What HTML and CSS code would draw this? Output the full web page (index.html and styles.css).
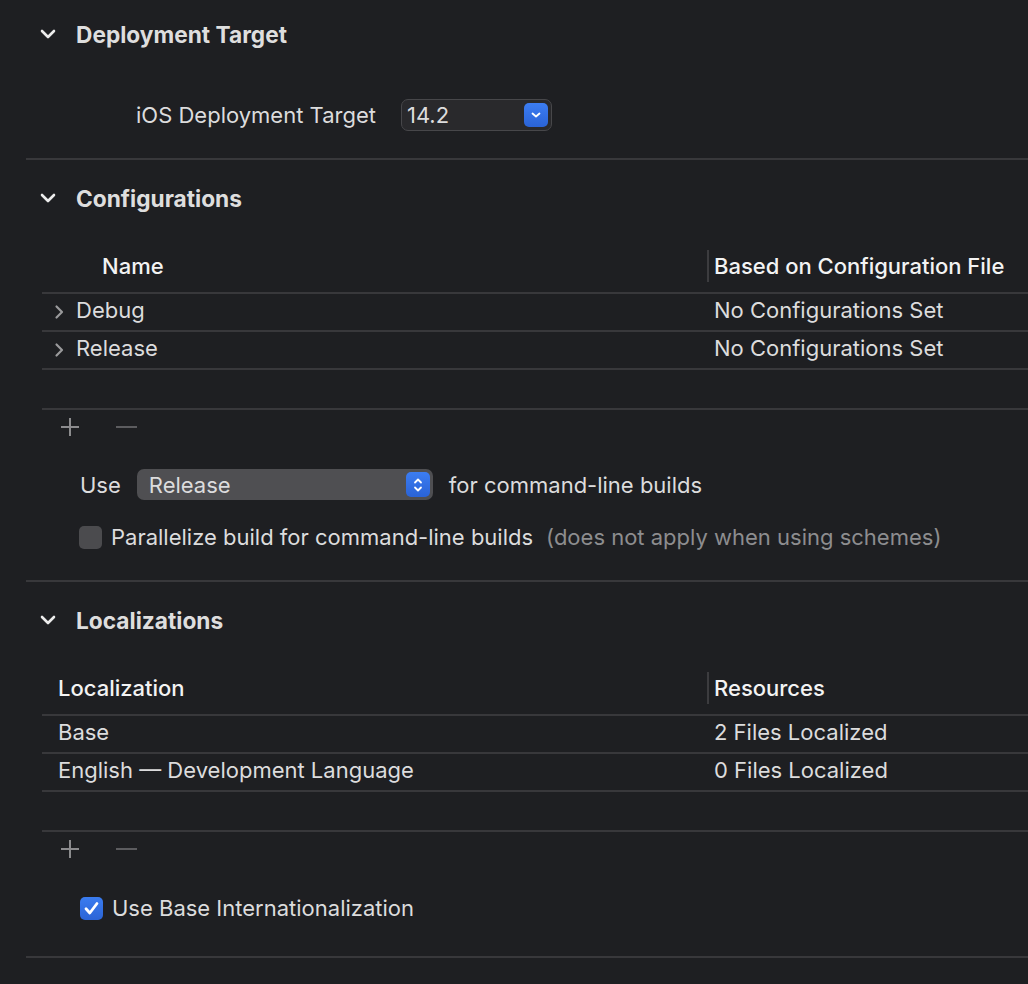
FILE: index.html
```html
<!DOCTYPE html>
<html>
<head>
<meta charset="utf-8">
<link rel="stylesheet" href="styles.css">
</head>
<body>
<div class="page">
  <section class="sec sec-first">
    <div class="sec-head head-first">
      <svg class="sec-chev" width="16" height="10" viewBox="0 0 16 10"><path d="M2 2 L8 8 L14 2" /></svg>
      <h2 class="sec-title">Deployment Target</h2>
    </div>
    <div class="field-row">
      <span class="field-label">iOS Deployment Target</span>
      <div class="popup popup-dark">
        <span class="popup-text">14.2</span>
        <span class="pbtn pbtn-down"><svg width="12" height="8" viewBox="0 0 12 8"><path d="M2.5 2.5 L6 5.5 L9.5 2.5" /></svg></span>
      </div>
    </div>
  </section>

  <section class="sec sec-config">
    <div class="sec-head">
      <svg class="sec-chev" width="16" height="10" viewBox="0 0 16 10"><path d="M2 2 L8 8 L14 2" /></svg>
      <h2 class="sec-title">Configurations</h2>
    </div>
    <div class="table">
      <div class="trow thead">
        <div class="c1 c1-name">Name</div>
        <div class="c2"><span class="coldiv"></span>Based on Configuration File</div>
      </div>
      <div class="trow">
        <div class="c1 c1-disc"><svg class="disc" width="10" height="16" viewBox="0 0 10 16"><path d="M2.5 2.5 L8 8 L2.5 13.5" /></svg>Debug</div>
        <div class="c2">No Configurations Set</div>
      </div>
      <div class="trow">
        <div class="c1 c1-disc"><svg class="disc" width="10" height="16" viewBox="0 0 10 16"><path d="M2.5 2.5 L8 8 L2.5 13.5" /></svg>Release</div>
        <div class="c2">No Configurations Set</div>
      </div>
      <div class="trow trow-empty"></div>
    </div>
    <div class="addrm">
      <svg class="plus" width="18" height="18" viewBox="0 0 18 18"><path d="M9 0 V18 M0 9 H18" /></svg>
      <svg class="minus" width="21" height="4" viewBox="0 0 21 4"><path d="M0 2 H21" /></svg>
    </div>
    <div class="use-row">
      <span>Use</span>
      <div class="popup popup-light">
        <span class="popup-text">Release</span>
        <span class="pbtn pbtn-step"><svg width="12" height="20" viewBox="0 0 12 20"><path d="M3 7.5 L6 4.5 L9 7.5 M3 12.5 L6 15.5 L9 12.5" /></svg></span>
      </div>
      <span>for command-line builds</span>
    </div>
    <div class="check-row check-par">
      <span class="cb"></span>
      <span>Parallelize build for command-line builds</span>
      <span class="muted">(does not apply when using schemes)</span>
    </div>
  </section>

  <section class="sec sec-loc">
    <div class="sec-head">
      <svg class="sec-chev" width="16" height="10" viewBox="0 0 16 10"><path d="M2 2 L8 8 L14 2" /></svg>
      <h2 class="sec-title">Localizations</h2>
    </div>
    <div class="table">
      <div class="trow thead">
        <div class="c1 c1-loc">Localization</div>
        <div class="c2"><span class="coldiv"></span>Resources</div>
      </div>
      <div class="trow">
        <div class="c1 c1-loc">Base</div>
        <div class="c2">2 Files Localized</div>
      </div>
      <div class="trow">
        <div class="c1 c1-loc">English — Development Language</div>
        <div class="c2">0 Files Localized</div>
      </div>
      <div class="trow trow-empty"></div>
    </div>
    <div class="addrm">
      <svg class="plus" width="18" height="18" viewBox="0 0 18 18"><path d="M9 0 V18 M0 9 H18" /></svg>
      <svg class="minus" width="21" height="4" viewBox="0 0 21 4"><path d="M0 2 H21" /></svg>
    </div>
    <div class="check-row check-base">
      <span class="cb cb-on"><svg width="23" height="23" viewBox="0 0 23 23"><path d="M6 11.8 L9.8 16 L17 6.5" /></svg></span>
      <span>Use Base Internationalization</span>
    </div>
  </section>
</div>
</body>
</html>
```

FILE: styles.css
```css
html, body {
  margin: 0;
  padding: 0;
  background: #1e1f22;
}
body {
  width: 1028px;
  height: 984px;
  overflow: hidden;
  font-family: "Inter", "Helvetica Neue", "Liberation Sans", sans-serif;
  font-size: 22px;
  color: #dcdcdd;
}
.page {
  display: flex;
  flex-direction: column;
}
.sec {
  margin-left: 26px;
  border-bottom: 2px solid #38383b;
  display: flex;
  flex-direction: column;
}
.sec-first { padding-bottom: 27px; }
.sec-config { padding-bottom: 32px; }
.sec-loc { padding-bottom: 36px; }

.sec-head {
  height: 76px;
  display: flex;
  align-items: center;
}
.head-first { height: 68px; }
.sec-chev {
  margin-left: 14px;
  margin-right: 20px;
  fill: none;
  stroke: #ececec;
  stroke-width: 2.6;
  stroke-linecap: round;
  stroke-linejoin: round;
}
.sec-title {
  margin: 0;
  font-size: 22.7px;
  font-weight: 700;
  color: #dedede;
}

.field-row {
  margin-top: 31px;
  height: 32px;
  display: flex;
  align-items: center;
}
.field-label {
  margin-left: 110px;
  margin-right: 25px;
}
.popup {
  box-sizing: border-box;
  display: flex;
  align-items: center;
  border-radius: 7px;
  position: relative;
}
.popup-dark {
  width: 151px;
  height: 32px;
  background: #29292c;
  border: 1px solid #47474a;
}
.popup-light {
  width: 296px;
  height: 31px;
  background: #4f4f52;
  margin: 0 16px 0 16px;
}
.popup-text {
  flex: 1;
  padding-left: 5px;
}
.popup-light .popup-text { padding-left: 12px; }
.pbtn {
  box-sizing: border-box;
  display: flex;
  align-items: center;
  justify-content: center;
  border-radius: 5px;
  background: linear-gradient(#3c7df2, #2a63d6);
  margin-right: 3px;
}
.pbtn svg {
  fill: none;
  stroke: #ffffff;
  stroke-width: 1.8;
  stroke-linecap: round;
  stroke-linejoin: round;
}
.pbtn-down { width: 24px; height: 24px; }
.pbtn-step { width: 24px; height: 25px; }

.table {
  margin-left: 16px;
  display: flex;
  flex-direction: column;
}
.trow {
  box-sizing: border-box;
  height: 38px;
  padding-bottom: 4px;
  border-bottom: 2px solid #38383b;
  display: flex;
  align-items: center;
}
.thead {
  height: 58px;
  padding-top: 4px;
  padding-bottom: 0;
  color: #f3f3f3;
  font-weight: 500;
}
.trow-empty { height: 40px; }
.c1 {
  box-sizing: border-box;
  width: 665px;
  flex: none;
  display: flex;
  align-items: center;
  white-space: nowrap;
}
.c1-name { padding-left: 60px; }
.c1-loc { padding-left: 16px; }
.c1-disc { padding-left: 12px; }
.disc {
  margin-right: 12px;
  margin-top: 4px;
  fill: none;
  stroke: #9a9a9c;
  stroke-width: 2.2;
  stroke-linecap: round;
  stroke-linejoin: round;
}
.c2 {
  box-sizing: border-box;
  flex: 1;
  display: flex;
  align-items: center;
  padding-left: 7px;
  white-space: nowrap;
}
.coldiv {
  width: 2px;
  height: 32px;
  background: #3c3c3f;
  margin-left: -7px;
  margin-right: 5px;
}

.addrm {
  height: 34px;
  display: flex;
  align-items: center;
}
.plus {
  margin-left: 35px;
  fill: none;
  stroke: #8c8c8e;
  stroke-width: 2;
}
.minus {
  margin-left: 37px;
  fill: none;
  stroke: #5c5c5f;
  stroke-width: 2;
}

.use-row {
  margin-top: 25px;
  height: 31px;
  display: flex;
  align-items: center;
  padding-left: 54px;
}
.check-row {
  display: flex;
  align-items: center;
  padding-left: 53px;
}
.check-par {
  margin-top: 26px;
  height: 22px;
}
.check-base {
  margin-top: 30px;
  height: 24px;
  padding-left: 54px;
}
.cb {
  box-sizing: border-box;
  width: 23px;
  height: 23px;
  border-radius: 5px;
  background: #4b4b4e;
  margin-right: 9px;
  flex: none;
  display: flex;
}
.cb-on {
  background: linear-gradient(#3a7cf0, #2b64d6);
}
.cb-on svg {
  fill: none;
  stroke: #ffffff;
  stroke-width: 2.8;
  stroke-linecap: round;
  stroke-linejoin: round;
}
.muted {
  color: #8d8d8f;
  margin-left: 13px;
}
```
